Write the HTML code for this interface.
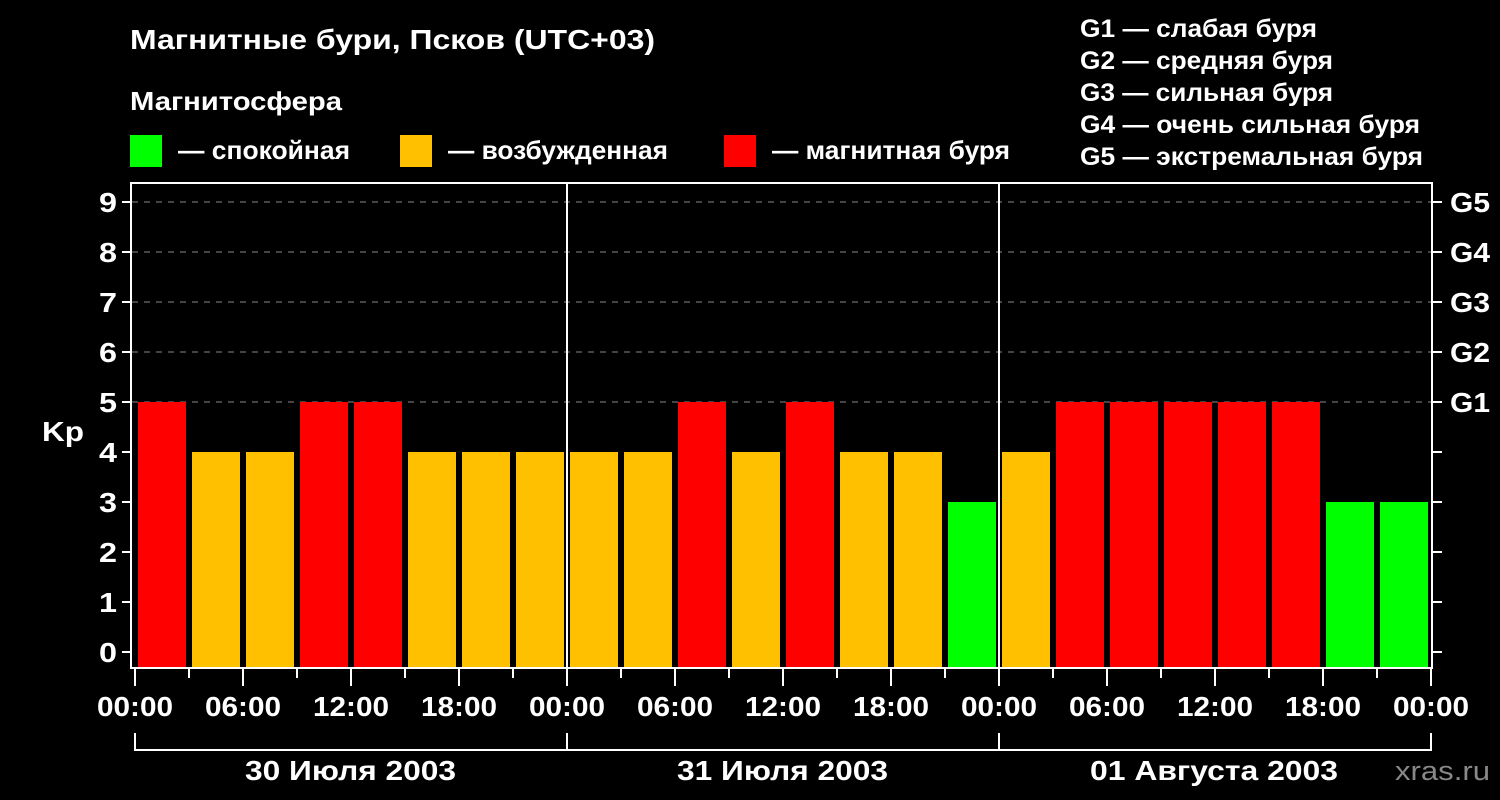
<!DOCTYPE html>
<html><head><meta charset="utf-8"><style>
html,body{margin:0;padding:0;background:#000;}
svg{display:block;}
text{font-family:"Liberation Sans",Arial,sans-serif;font-weight:bold;fill:#fff;}
</style></head><body>
<svg width="1500" height="800" viewBox="0 0 1500 800" xmlns="http://www.w3.org/2000/svg">
<rect width="1500" height="800" fill="#000"/>
<text x="130" y="49" font-size="28" textLength="525" lengthAdjust="spacingAndGlyphs">Магнитные бури, Псков (UTC+03)</text>
<text x="130" y="110" font-size="26" textLength="212" lengthAdjust="spacingAndGlyphs">Магнитосфера</text>
<rect x="130" y="135" width="32" height="32" fill="#00ff00"/>
<text x="178" y="159" font-size="26" textLength="172" lengthAdjust="spacingAndGlyphs">— спокойная</text>
<rect x="400" y="135" width="32" height="32" fill="#ffc000"/>
<text x="448" y="159" font-size="26" textLength="220" lengthAdjust="spacingAndGlyphs">— возбужденная</text>
<rect x="724" y="135" width="32" height="32" fill="#ff0000"/>
<text x="772" y="159" font-size="26" textLength="238" lengthAdjust="spacingAndGlyphs">— магнитная буря</text>
<g font-size="25">
<text x="1080" y="37" textLength="237" lengthAdjust="spacingAndGlyphs">G1 — слабая буря</text>
<text x="1080" y="69" textLength="253" lengthAdjust="spacingAndGlyphs">G2 — средняя буря</text>
<text x="1080" y="101" textLength="253" lengthAdjust="spacingAndGlyphs">G3 — сильная буря</text>
<text x="1080" y="133" textLength="340" lengthAdjust="spacingAndGlyphs">G4 — очень сильная буря</text>
<text x="1080" y="165" textLength="343" lengthAdjust="spacingAndGlyphs">G5 — экстремальная буря</text>
</g>
<g stroke="#888" stroke-width="1" stroke-dasharray="6,6">
<line x1="132" y1="202" x2="1432" y2="202"/>
<line x1="132" y1="252" x2="1432" y2="252"/>
<line x1="132" y1="302" x2="1432" y2="302"/>
<line x1="132" y1="352" x2="1432" y2="352"/>
<line x1="132" y1="402" x2="1432" y2="402"/>
</g>
<g id="bars"></g>
<g stroke="#fff" stroke-width="2" fill="none">
<rect x="131" y="183" width="1301" height="485"/>
<line x1="567" y1="183" x2="567" y2="668"/>
<line x1="999" y1="183" x2="999" y2="668"/>
<path d="M135 733V750H1431V733M567 733V750M999 733V750"/>
</g>
<g id="ticks" stroke="#fff" stroke-width="2"></g>
<g id="labels" font-size="28"></g>
<text x="42" y="441" font-size="28" textLength="42" lengthAdjust="spacingAndGlyphs">Kp</text>
<g font-size="28">
<text x="245" y="780" textLength="211" lengthAdjust="spacingAndGlyphs">30 Июля 2003</text>
<text x="677" y="780" textLength="211" lengthAdjust="spacingAndGlyphs">31 Июля 2003</text>
<text x="1090" y="780" textLength="248" lengthAdjust="spacingAndGlyphs">01 Августа 2003</text>
</g>
<text x="1395" y="780" font-size="27" textLength="95" lengthAdjust="spacingAndGlyphs" style="font-weight:normal;fill:#888">xras.ru</text>
<script>
var v=[5,4,4,5,5,4,4,4,4,4,5,4,5,4,4,3,4,5,5,5,5,5,3,3];
var ns="http://www.w3.org/2000/svg",b=document.getElementById('bars'),t=document.getElementById('ticks'),l=document.getElementById('labels');
function el(p,n,a,txt){var e=document.createElementNS(ns,n);for(var k in a)e.setAttribute(k,a[k]);if(txt)e.textContent=txt;p.appendChild(e);}
v.forEach(function(k,i){var c=k>=5?'#ff0000':k==4?'#ffc000':'#00ff00';var top=652-k*50;el(b,'rect',{x:138+54*i,y:top,width:48,height:668-top,fill:c});});
for(var k=0;k<=9;k++){var y=652-k*50;el(t,'line',{x1:122,y1:y,x2:131,y2:y});el(t,'line',{x1:1432,y1:y,x2:1442,y2:y});el(l,'text',{x:99,y:y+10,textLength:18,lengthAdjust:'spacingAndGlyphs'},''+k);
if(k>=5)el(l,'text',{x:1450,y:y+10,textLength:40,lengthAdjust:'spacingAndGlyphs'},'G'+(k-4));}
var hl=['00:00','06:00','12:00','18:00'];
for(var i=0;i<=24;i++){var x=135+54*i;el(t,'line',{x1:x,y1:669,x2:x,y2:i%2?678:686});if(i%2==0)el(l,'text',{x:x-38,y:716,textLength:76,lengthAdjust:'spacingAndGlyphs'},hl[(i/2)%4]);}
</script>
</svg>
</body></html>
